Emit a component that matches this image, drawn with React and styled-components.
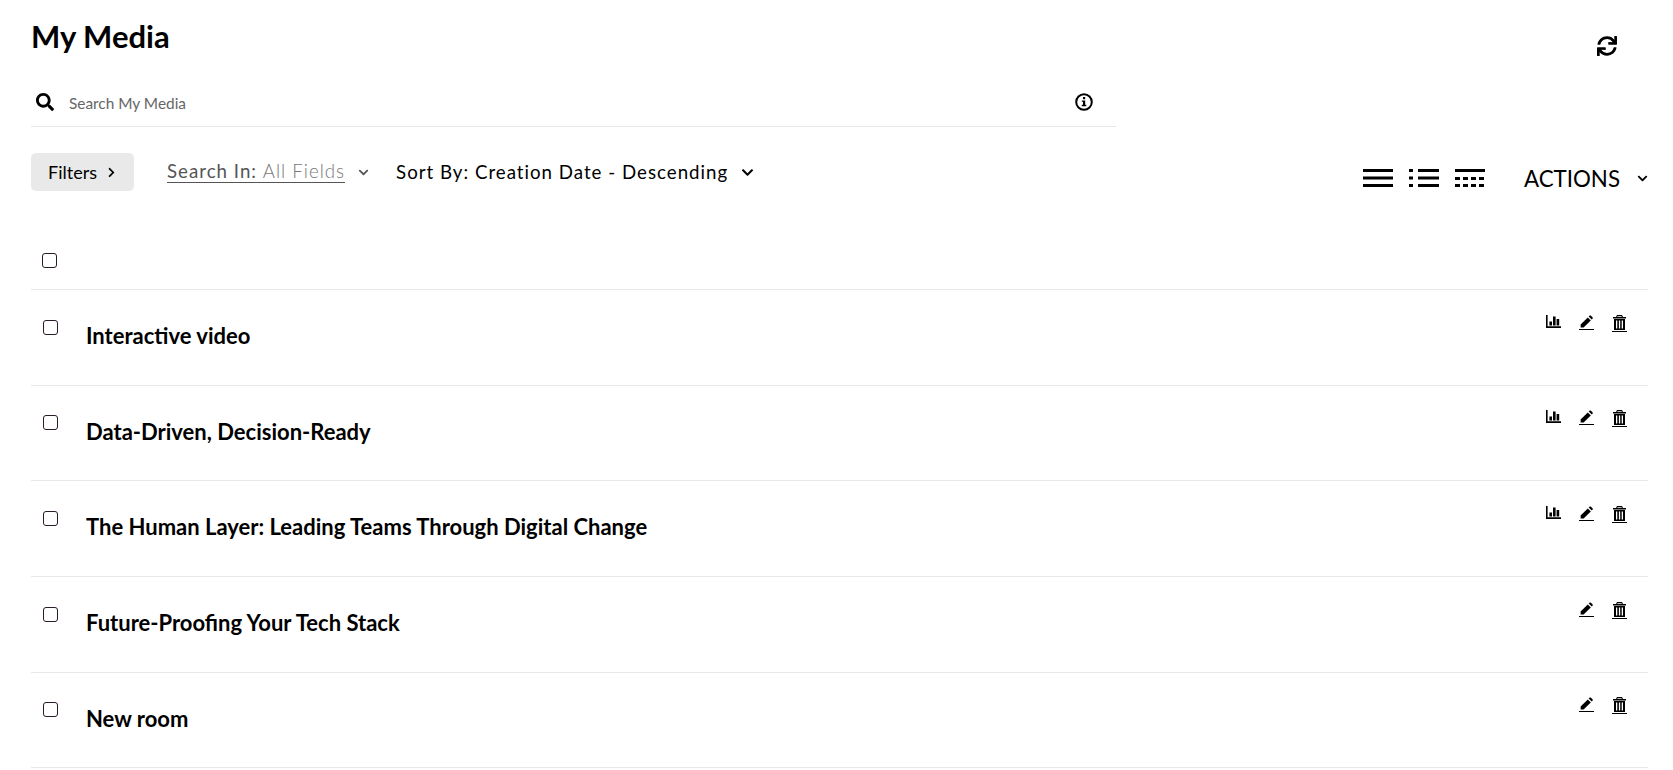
import React from 'react'
import styled, { createGlobalStyle } from 'styled-components'
import { FaSearch, FaSync, FaChevronDown, FaChevronRight } from 'react-icons/fa'

const GlobalStyle = createGlobalStyle`
  html, body {
    margin: 0;
    padding: 0;
    background: #fff;
    color: #000;
    font-family: Lato, "Open Sans", sans-serif;
  }
  svg {
    display: block;
  }
`

const Page = styled.div`
  width: 1673px;
  height: 770px;
  overflow: hidden;
  box-sizing: border-box;
  padding: 0 25px 0 31px;
`

const Header = styled.div`
  display: flex;
  justify-content: space-between;
  align-items: flex-start;
  height: 153px;
`

const HeaderLeft = styled.div`
  width: 1085px;
`

const Title = styled.h1`
  margin: 0;
  padding-top: 16px;
  height: 58px;
  box-sizing: border-box;
  font-size: 31px;
  line-height: 40px;
  font-weight: 700;
`

const SearchBar = styled.div`
  display: flex;
  align-items: center;
  height: 52px;
  margin-top: 17px;
  padding: 2px 23px 0 5px;
  border-bottom: 1px solid #e8e8e8;
  box-sizing: border-box;
`

const SearchText = styled.span`
  flex: 1;
  margin-left: 15px;
  padding-top: 2px;
  font-size: 15.4px;
  color: #666;
`

const RefreshButton = styled.div`
  display: flex;
  margin: 36px 31px 0 0;
  font-size: 20px;
`

const Toolbar = styled.div`
  display: flex;
  align-items: flex-start;
  height: 100px;
`

const FilterButton = styled.div`
  display: flex;
  align-items: center;
  justify-content: center;
  gap: 9px;
  width: 103px;
  height: 38px;
  border-radius: 5px;
  background: #e9e9e9;
  font-size: 18px;
`

const Dropdown = styled.div`
  display: flex;
  align-items: center;
  height: 38px;
  margin-left: ${p => p.$gap}px;
  font-size: 18.7px;
  letter-spacing: 1px;
  color: ${p => (p.$muted ? '#555' : '#000')};
`

const DropLabel = styled.span`
  border-bottom: ${p => (p.$line ? '1px solid #555' : 'none')};
  line-height: 21px;
`

const Light = styled.span`
  color: #777;
  font-weight: 300;
`

const Caret = styled.span`
  display: flex;
  margin-left: ${p => p.$gap}px;
  font-size: ${p => p.$size}px;
  color: ${p => p.$color};
`

const ToolbarRight = styled.div`
  display: flex;
  align-items: center;
  margin-left: auto;
  height: 38px;
  margin-top: 6px;
`

const ViewIcons = styled.div`
  display: flex;
  gap: 16px;
  align-items: center;
  margin-right: 39px;
`

const ActionsLabel = styled.span`
  font-size: 22.3px;
`

const HeadRow = styled.div`
  height: 36px;
  border-bottom: 1px solid #e8e8e8;
  padding-left: 11px;
`

const Box = styled.span`
  display: block;
  box-sizing: border-box;
  width: 15px;
  height: 15px;
  border: 1.5px solid #2a1a2a;
  border-radius: 3px;
  background: #fff;
`

const Row = styled.div`
  display: flex;
  height: 95.7px;
  box-sizing: border-box;
  border-bottom: 1px solid #e8e8e8;
  padding-left: 12px;
`

const RowCheck = styled.div`
  width: 43px;
  padding-top: 29.5px;
`

const RowTitle = styled.div`
  flex: 1;
  padding-top: 31px;
  font-size: 22px;
  line-height: 30px;
  font-weight: 700;
`

const RowActions = styled.div`
  display: flex;
  align-items: flex-start;
  gap: 18px;
  padding: 24.5px 21.5px 0 0;
`

const ActionIcon = styled.span`
  display: block;
  width: 15px;
  height: ${p => p.$height}px;
  border-bottom: ${p => (p.$line ? '1px solid #000' : 'none')};
`

const Info = () => (
  <svg width="18" height="18" viewBox="0 0 18 18">
    <circle cx="9" cy="9" r="7.8" fill="none" stroke="#000" strokeWidth="2" />
    <rect x="8" y="4" width="2.2" height="2.2" />
    <path d="M6.8 7.4h3.4v4.4h1.1v1.4H6.8v-1.4h1.2v-3H6.8z" />
  </svg>
)

const ListIcon = ({ dots, dashed }) => (
  <svg width="30" height="20" viewBox="0 0 30 20">
    {!dots && !dashed && (
      <>
        <rect x="0" y="1" width="30" height="3" />
        <rect x="0" y="8.5" width="30" height="3" />
        <rect x="0" y="16" width="30" height="3" />
      </>
    )}
    {dots && (
      <>
        {[1, 8.5, 16].map(y => (
          <React.Fragment key={y}>
            <rect x="0" y={y} width="4" height="3" />
            <rect x="9" y={y} width="21" height="3" />
          </React.Fragment>
        ))}
      </>
    )}
    {dashed && (
      <>
        <rect x="0" y="1" width="30" height="3" />
        {[9, 16].map(y =>
          [0, 8, 16, 24].map(x => <rect key={`${x}-${y}`} x={x} y={y} width="5" height="3" />)
        )}
      </>
    )}
  </svg>
)

const BarsIcon = () => (
  <svg width="15" height="13" viewBox="0 0 15 13">
    <path d="M0 0h1.6v11.2H15V13H0z" />
    <rect x="3.4" y="6.5" width="2.6" height="4" />
    <rect x="7" y="1.5" width="2.6" height="9" />
    <rect x="10.6" y="4" width="2.6" height="6.5" />
  </svg>
)

const PencilIcon = () => (
  <svg width="15" height="13" viewBox="0 0 15 13">
    <path d="M8.8 2.4l3 3-7.2 7.1H1.6V9.5z" />
    <path d="M9.7 1.5l.8-.8a1 1 0 0 1 1.4 0l1.6 1.6a1 1 0 0 1 0 1.4l-.8.8z" />
  </svg>
)

const TrashIcon = () => (
  <svg width="15" height="15" viewBox="0 0 15 15">
    <path d="M5 0h5l1 2h3v1.4H1V2h3zM5.5 1.2L5.2 2h4.6l-.3-.8z" fillRule="evenodd" />
    <path d="M2 4h11v11H2zM4 5.5v8h1.3v-8zm2.9 0v8h1.3v-8zm2.8 0v8H11v-8z" fillRule="evenodd" />
  </svg>
)

const items = [
  { id: 1, title: 'Interactive video', stats: true },
  { id: 2, title: 'Data-Driven, Decision-Ready', stats: true },
  { id: 3, title: 'The Human Layer: Leading Teams Through Digital Change', stats: true },
  { id: 4, title: 'Future-Proofing Your Tech Stack', stats: false },
  { id: 5, title: 'New room', stats: false },
]

function App() {
  return (
    <Page>
      <GlobalStyle />
      <Header>
        <HeaderLeft>
          <Title>My Media</Title>
          <SearchBar>
            <FaSearch size={18} />
            <SearchText>Search My Media</SearchText>
            <Info />
          </SearchBar>
        </HeaderLeft>
        <RefreshButton>
          <FaSync />
        </RefreshButton>
      </Header>
      <Toolbar>
        <FilterButton>
          Filters <FaChevronRight size={11} />
        </FilterButton>
        <Dropdown $gap={33} $muted>
          <DropLabel $line>
            Search In: <Light>All Fields</Light>
          </DropLabel>
          <Caret $gap={13} $size={11} $color="#555">
            <FaChevronDown />
          </Caret>
        </Dropdown>
        <Dropdown $gap={27}>
          <DropLabel>Sort By: Creation Date - Descending</DropLabel>
          <Caret $gap={13} $size={13} $color="#000">
            <FaChevronDown />
          </Caret>
        </Dropdown>
        <ToolbarRight>
          <ViewIcons>
            <ListIcon />
            <ListIcon dots />
            <ListIcon dashed />
          </ViewIcons>
          <ActionsLabel>ACTIONS</ActionsLabel>
          <Caret $gap={17} $size={11} $color="#000">
            <FaChevronDown />
          </Caret>
        </ToolbarRight>
      </Toolbar>
      <HeadRow>
        <Box />
      </HeadRow>
      {items.map(item => (
        <Row key={item.id}>
          <RowCheck>
            <Box />
          </RowCheck>
          <RowTitle>{item.title}</RowTitle>
          <RowActions>
            {item.stats && (
              <ActionIcon $height={13}>
                <BarsIcon />
              </ActionIcon>
            )}
            <ActionIcon $height={14} $line>
              <PencilIcon />
            </ActionIcon>
            <ActionIcon $height={16} $line>
              <TrashIcon />
            </ActionIcon>
          </RowActions>
        </Row>
      ))}
    </Page>
  )
}

export default App
